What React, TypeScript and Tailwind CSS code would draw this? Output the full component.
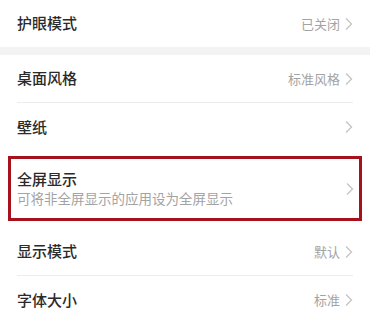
const font = { fontFamily: '"Noto Sans CJK SC", "Liberation Sans", sans-serif' }

function Chevron() {
  return (
    <svg width="8" height="14" viewBox="0 0 8 14" className="ml-[5px] shrink-0">
      <path d="M1 1.5 L6.5 7 L1 12.5" fill="none" stroke="#c4c4c4" strokeWidth="1.3" />
    </svg>
  )
}

function Row({ title, value, divider }: { title: string; value?: string; divider?: boolean }) {
  return (
    <div className="px-[17px]">
      <div className={`flex h-[48px] items-center ${divider ? "border-b border-[#ececec]" : ""}`}>
        <span className="flex-1 text-[15px] font-medium text-[#2a2a2a]">{title}</span>
        {value && <span className="text-[13px] text-[#a3a3a3]">{value}</span>}
        <Chevron />
      </div>
    </div>
  )
}

export default function App() {
  return (
    <div className="w-[370px] h-[322px] overflow-hidden bg-white" style={font}>
      <div className="flex h-[47px] items-center px-[17px]">
        <span className="flex-1 text-[15px] font-medium text-[#2a2a2a]">护眼模式</span>
        <span className="text-[13px] text-[#a3a3a3]">已关闭</span>
        <Chevron />
      </div>
      <div className="h-[8px] bg-[#f3f3f3]" />
      <Row title="桌面风格" value="标准风格" divider />
      <Row title="壁纸" />
      <div className="px-[8px] pt-[5px] pb-[7px]">
        <div className="flex h-[65px] items-center border-[3px] border-[#a5121b] pl-[6px] pr-[5px]">
          <div className="flex flex-1 flex-col">
            <span className="text-[15px] leading-[20px] font-medium text-[#2a2a2a]">全屏显示</span>
            <span className="text-[13.5px] leading-[19px] text-[#a3a3a3]">可将非全屏显示的应用设为全屏显示</span>
          </div>
          <Chevron />
        </div>
      </div>
      <Row title="显示模式" value="默认" divider />
      <Row title="字体大小" value="标准" />
    </div>
  )
}
